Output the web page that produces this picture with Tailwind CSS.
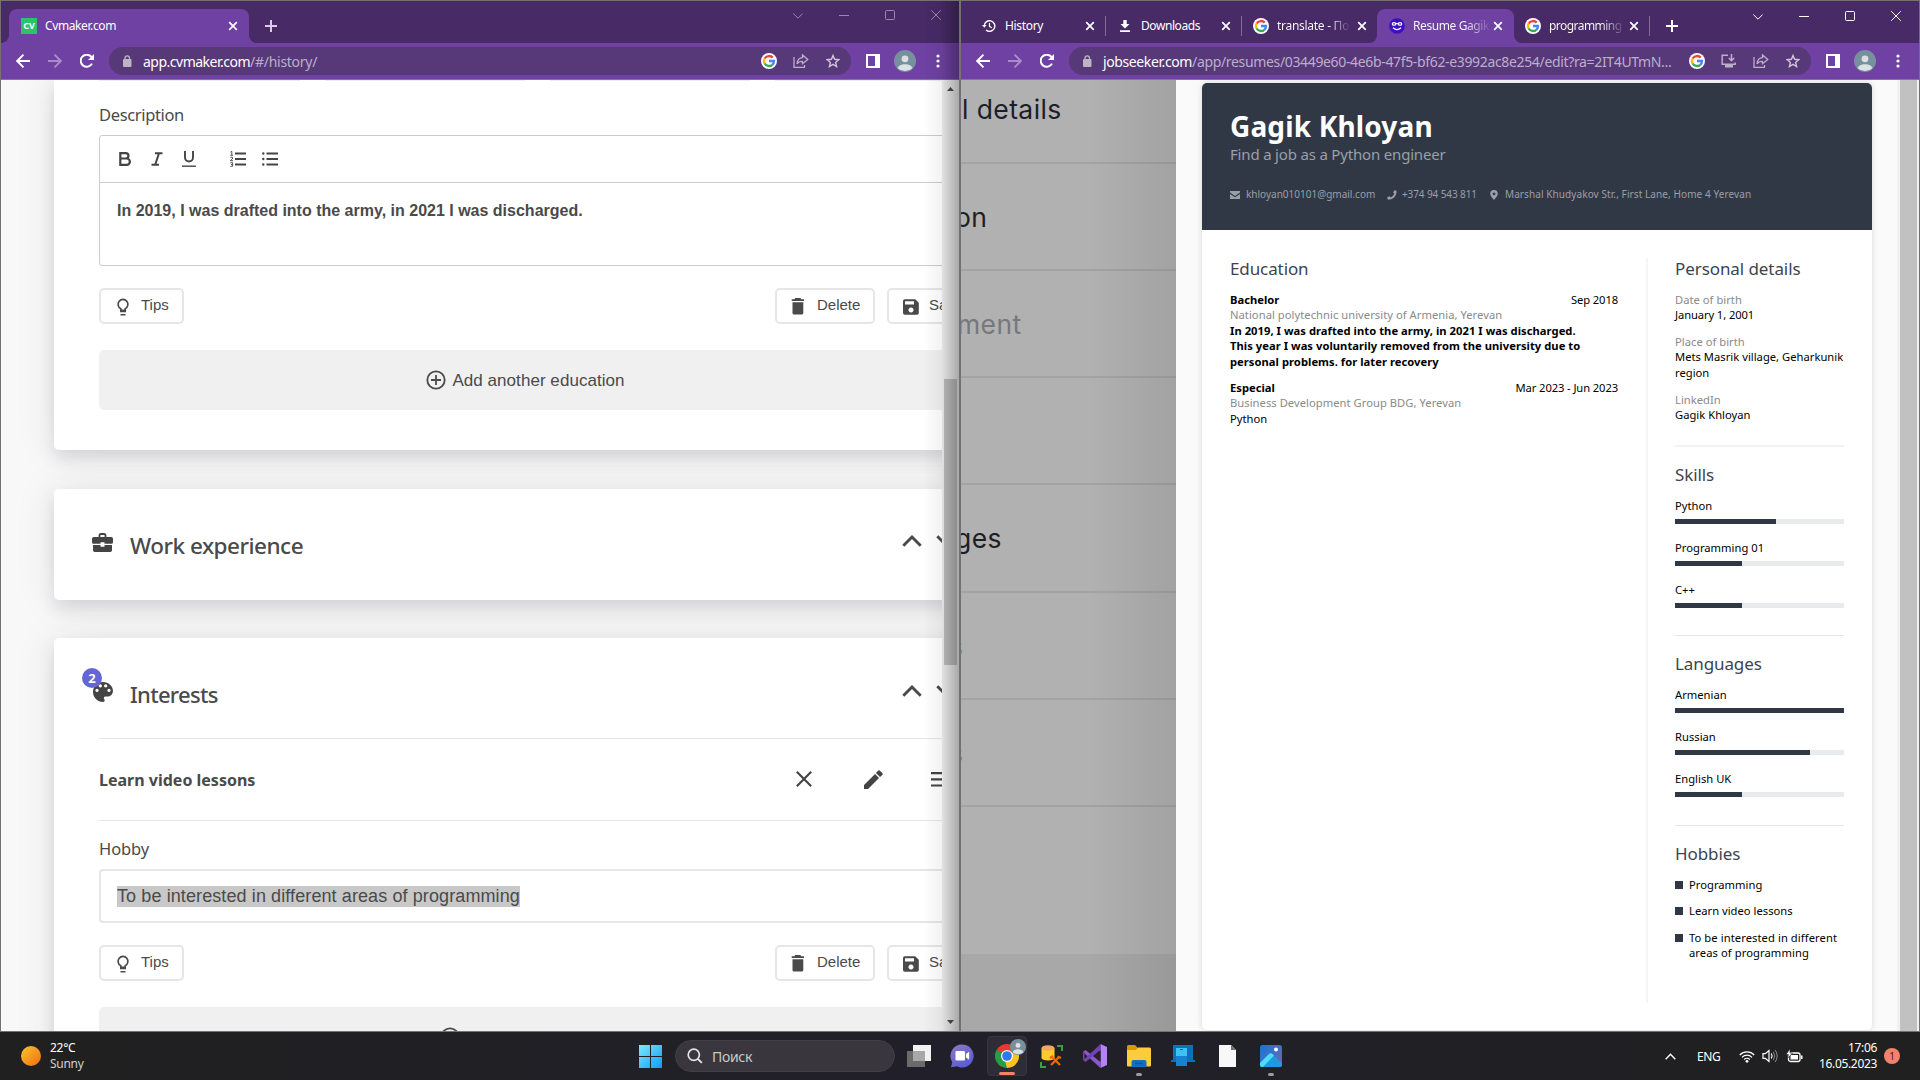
<!DOCTYPE html>
<html lang="en">
<head>
<meta charset="utf-8">
<title>Desktop</title>
<script src="https://cdn.jsdelivr.net/npm/@tailwindcss/browser@4"></script>
</head>
<body class="w-[1920px] h-[1080px] overflow-hidden bg-[#202024] font-['Noto_Sans',sans-serif] whitespace-nowrap">

<svg class="hidden">
  <defs>
    <symbol id="close" viewBox="0 0 10 10"><path d="M1.2 1.2l7.6 7.6M8.8 1.2L1.2 8.8" stroke="currentColor" stroke-width="1.7" fill="none"/></symbol>
    <symbol id="plus" viewBox="0 0 12 12"><path d="M6 0v12M0 6h12" stroke="currentColor" stroke-width="2" fill="none"/></symbol>
    <symbol id="back" viewBox="0 0 14 14"><path d="M14 7H1.5M7.5 .7L1.2 7l6.3 6.3" stroke="currentColor" stroke-width="1.9" fill="none"/></symbol>
    <symbol id="forward" viewBox="0 0 14 14"><path d="M0 7h12.5M6.500 .7L12.800 7l-6.300 6.300" stroke="currentColor" stroke-width="1.900" fill="none"/></symbol>
    <symbol id="reload" viewBox="0 0 14 14"><path d="M12 9.600A6 6 0 1 1 11.400 3" stroke="currentColor" stroke-width="2" fill="none"/><path d="M14 0v6H8z" fill="currentColor"/></symbol>
    <symbol id="lock" viewBox="0 0 10 12"><rect x="1" y="4" width="8.500" height="8" rx="1" fill="currentColor"/><path d="M3 4.500V3.200a2.200 2.200 0 0 1 4.500 0v1.300" stroke="currentColor" stroke-width="1.300" fill="none"/></symbol>
    <symbol id="google" viewBox="0 0 16 16"><circle cx="8" cy="8" r="8" fill="#fff"/><g fill="none" stroke-width="2.300"><path d="M3.700 5.500A5 5 0 0 1 11.700 4.600" stroke="#ea4335"/><path d="M3.800 10.600A5 5 0 0 1 3.700 5.400" stroke="#fbbc05"/><path d="M11.300 11.800A5 5 0 0 1 3.700 10.500" stroke="#34a853"/><path d="M8 8h5a5 5 0 0 1-1.800 3.900" stroke="#4285f4"/></g></symbol>
    <symbol id="share" viewBox="0 0 16 14"><path d="M1 3v10.300h10.500V11M9.500 3.700V.9L14.800 5.500 9.500 9.700V7.300C6.500 7.200 5 8.200 4 9.800 4.300 6.500 6 4 9.500 3.700z" stroke="currentColor" stroke-width="1.300" fill="none"/></symbol>
    <symbol id="install" viewBox="0 0 16 14"><path d="M7 1.300H1.200v9h13V8.500M10.500 0v6M7.800 4l2.700 2.700L13.200 4" stroke="currentColor" stroke-width="1.500" fill="none"/><path d="M4 11h8v2.500H4z" fill="currentColor"/></symbol>
    <symbol id="star" viewBox="0 0 14 14"><path d="M7 1.500l1.600 3.800 4.200.4-3.200 2.700 1 4.100L7 10.300l-3.600 2.200 1-4.100L1.200 5.700l4.200-.4z" stroke="currentColor" stroke-width="1.400" fill="none"/></symbol>
    <symbol id="panel" viewBox="0 0 14 14"><path d="M0 0h14v14H0zM2 2v10h7V2z" fill="#fff" fill-rule="evenodd"/></symbol>
    <symbol id="avatar" viewBox="0 0 22 22"><circle cx="11" cy="11" r="11" fill="#78909c"/><circle cx="11" cy="8.800" r="3.400" fill="#dbe1e4"/><path d="M3.600 18.200C5 12.800 17 12.800 18.400 18.200A11 11 0 0 1 3.600 18.200z" fill="#dbe1e4"/></symbol>
    <symbol id="dots" viewBox="0 0 4 14"><g fill="#fff"><circle cx="2" cy="2" r="1.600"/><circle cx="2" cy="7" r="1.600"/><circle cx="2" cy="12" r="1.600"/></g></symbol>
    <symbol id="wchev" viewBox="0 0 10 6"><path d="M.3.500L5 5.200 9.700.500" stroke="currentColor" stroke-width="1" fill="none"/></symbol>
    <symbol id="wmin" viewBox="0 0 10 10"><path d="M0 5.500h10" stroke="currentColor"/></symbol>
    <symbol id="wmax" viewBox="0 0 10 10"><rect x=".5" y=".5" width="9" height="9" rx="1" stroke="currentColor" fill="none"/></symbol>
    <symbol id="wclose" viewBox="0 0 10 10"><path d="M.2.2l9.600 9.600M9.800.2L.2 9.800" stroke="currentColor"/></symbol>
    <symbol id="flare" viewBox="0 0 8 8"><path d="M8 0v8H0a8 8 0 0 0 8-8z" fill="#6e41a2"/></symbol>
    <symbol id="bulb" viewBox="0 0 14 18"><path d="M4.800 12.200V10.500a4.900 4.900 0 1 1 4.400 0v1.700z" transform="translate(0 .2)" stroke="currentColor" stroke-width="1.700" fill="none"/><path d="M4 13.600h6M4.500 16.800h5" stroke="currentColor" stroke-width="1.500"/></symbol>
    <symbol id="trash" viewBox="0 0 14 17"><path d="M4.200 0h5.200l.8 1.200H13v1.900H.7V1.200h2.700zM1.500 4.200h10.800V15a1.500 1.500 0 0 1-1.500 1.500H3A1.500 1.500 0 0 1 1.500 15z" fill="currentColor"/></symbol>
    <symbol id="save" viewBox="0 0 16 16"><path d="M1.800.2h10.400L15.800 3.800V14a1.800 1.800 0 0 1-1.800 1.800H1.800A1.800 1.800 0 0 1 0 14V2A1.800 1.800 0 0 1 1.800.2zM2 2.200v3.200h9V2.200zM8 8.600a2.500 2.500 0 1 0 .01 0z" fill="currentColor" fill-rule="evenodd"/></symbol>
    <symbol id="addc" viewBox="0 0 20 20"><circle cx="10" cy="10" r="8.700" stroke="currentColor" stroke-width="1.800" fill="none"/><path d="M10 5v10M5 10h10" stroke="currentColor" stroke-width="1.800"/></symbol>
    <symbol id="up" viewBox="0 0 20 12"><path d="M1.300 10.700L10 2l8.700 8.700" stroke="currentColor" stroke-width="2.900" fill="none"/></symbol>
    <symbol id="down" viewBox="0 0 20 12"><path d="M1.300 1.300L10 10l8.700-8.700" stroke="currentColor" stroke-width="2.900" fill="none"/></symbol>
  </defs>
</svg>

<div class="flex h-[1032px]">

  <!-- Left browser window -->
  <section class="relative w-[960px] h-[1032px] border border-[#727272] overflow-hidden flex flex-col">
    <div class="h-[42px] bg-[#472a66] flex shrink-0">
      <svg class="w-2 h-2 self-end"><use href="#flare"/></svg>
      <div class="w-[240px] h-[34px] mt-2 bg-[#6e41a2] rounded-t-lg flex items-center pl-3 pr-[11px] text-white">
        <span class="w-4 h-4 bg-[#2dc26b] text-[9px] font-bold leading-4 text-center">CV</span>
        <span class="ml-2 text-[12px] tracking-[-0.39px]">Cvmaker.com</span>
        <svg class="w-[10px] h-[10px] ml-auto"><use href="#close"/></svg>
      </div>
      <svg class="w-2 h-2 self-end -scale-x-100"><use href="#flare"/></svg>
      <svg class="w-3 h-3 mt-[19px] ml-2 text-[#d9cfe3]"><use href="#plus"/></svg>
      <div class="ml-auto mr-[18px] mt-[9px] flex gap-9 text-[#9a87ae]">
        <svg class="w-[10px] h-[6px] mt-[3px]"><use href="#wchev"/></svg>
        <svg class="w-[10px] h-[10px]"><use href="#wmin"/></svg>
        <svg class="w-[10px] h-[10px]"><use href="#wmax"/></svg>
        <svg class="w-[10px] h-[10px]"><use href="#wclose"/></svg>
      </div>
    </div>
    <div class="h-[37px] shrink-0 bg-[#6e41a2] border-b border-[#8d68b8] flex items-center text-white">
      <svg class="w-[14px] h-[14px] ml-[15px]"><use href="#back"/></svg>
      <svg class="w-[14px] h-[14px] ml-[18px] text-[#a98cc8]"><use href="#forward"/></svg>
      <svg class="w-[14px] h-[14px] ml-[18px]"><use href="#reload"/></svg>
      <div class="ml-[15px] w-[742px] h-7 rounded-full bg-[#573879] flex items-center pl-[13px] pr-[11px]">
        <svg class="w-[10px] h-3 text-[#bdb5c4]"><use href="#lock"/></svg>
        <span class="ml-[11px] text-[14px] tracking-[-0.5px]">app.cvmaker.com</span><span class="text-[14px] tracking-[-0.28px] text-[#bcafc9]">/#/history/</span>
        <svg class="w-4 h-4 ml-auto"><use href="#google"/></svg>
        <svg class="w-4 h-[14px] ml-4 text-[#bcafc9]"><use href="#share"/></svg>
        <svg class="w-[14px] h-[14px] ml-[17px] text-[#cfc5d9]"><use href="#star"/></svg>
      </div>
      <svg class="w-[14px] h-[14px] ml-[15px]"><use href="#panel"/></svg>
      <svg class="w-[22px] h-[22px] ml-[14px]"><use href="#avatar"/></svg>
      <svg class="w-1 h-[14px] ml-5"><use href="#dots"/></svg>
    </div>

    <div class="flex flex-1 min-h-0">
      <main class="w-[941px] overflow-hidden bg-[#f8f8f8] pl-[52.500px] text-[#4a4a4a]">
        <div class="w-[945px] flex flex-col gap-[39px]">
          <!-- Education card -->
          <div class="h-[370px] shrink-0 bg-white rounded-b-[5px] shadow-[0_8px_16px_rgba(40,40,60,.13),0_0_44px_rgba(40,40,60,.09)] pl-[45.500px] flex flex-col">
            <div class="flex h-px gap-[25px]"><i class="w-[201px] bg-[#ebebeb]"></i><i class="w-[200px] bg-[#ebebeb]"></i><i class="w-[200px] bg-[#ebebeb]"></i><i class="w-[200px] bg-[#ebebeb]"></i></div>
            <div class="mt-[22px] h-6 leading-6 text-[16.500px] tracking-[-0.35px]">Description</div>
            <div class="mt-2 h-[131px] w-[853px] border border-[#ccc] rounded-[3px]">
              <div class="h-[47px] border-b border-[#ccc] flex items-center pl-[19px]">
                <svg class="w-3 h-[14px]" viewBox="0 0 12 14"><path d="M1.300 1.200h5.500a2.600 2.600 0 0 1 0 5.300H1.300zM1.300 6.500h6.400a3.100 3.100 0 0 1 0 6.300H1.300z" stroke="#444" stroke-width="2.200" fill="none"/></svg>
                <svg class="w-3 h-[14px] ml-5" viewBox="0 0 12 14"><path d="M4 1.200h7.500M.5 12.800H8M8 1.200L4.200 12.800" stroke="#444" stroke-width="2" fill="none"/></svg>
                <svg class="w-[14px] h-4 ml-[19px]" viewBox="0 0 14 16"><path d="M3 0v6.500a4 4 0 0 0 8 0V0" stroke="#444" stroke-width="1.900" fill="none"/><path d="M0 15.200h14" stroke="#444" stroke-width="1.400"/></svg>
                <svg class="w-4 h-4 ml-[34px]" viewBox="0 0 16 16"><path d="M5 2.500h11M5 8h11M5 13.500h11" stroke="#444" stroke-width="2"/><path d="M.5 1l1.300-.6V4M.3 4.300h2.700M.3 6.300h2.200v1.500L.3 9.700h2.700M.3 11.700h2.300v3.600H.3M1 13.500h1.600" stroke="#444" stroke-width=".9" fill="none"/></svg>
                <svg class="w-4 h-4 ml-4" viewBox="0 0 16 16"><path d="M4.500 2.500H16M4.500 8H16M4.500 13.500H16" stroke="#444" stroke-width="2"/><g fill="#444"><circle cx="1.300" cy="2.500" r="1.200"/><circle cx="1.300" cy="8" r="1.200"/><circle cx="1.300" cy="13.500" r="1.200"/></g></svg>
              </div>
              <p class="mt-[18px] pl-[17px] leading-5 text-[16px] font-bold font-['Liberation_Sans',sans-serif]">In 2019, I was drafted into the army, in 2021 I was discharged.</p>
            </div>
            <div class="mt-[22px] flex h-9 text-[15px] font-['Liberation_Sans',sans-serif]">
              <div class="w-[85px] shrink-0 border-2 border-[#e6e6e6] rounded-[5px] flex items-center pl-[15px]"><svg class="w-[14px] h-[18px] mt-[2px]"><use href="#bulb"/></svg><span class="ml-[11px] -mt-px">Tips</span></div>
              <div class="w-[100px] shrink-0 ml-[591px] border-2 border-[#e6e6e6] rounded-[5px] flex items-center pl-[14px]"><svg class="w-[14px] h-[17px]"><use href="#trash"/></svg><span class="ml-3 -mt-px">Delete</span></div>
              <div class="w-[103px] shrink-0 ml-3 border-2 border-[#e6e6e6] rounded-[5px] flex items-center pl-[14px]"><svg class="w-4 h-4 mt-px"><use href="#save"/></svg><span class="ml-[10px] -mt-px">Save</span></div>
            </div>
            <div class="mt-[26px] h-[60px] w-[853px] bg-[#f0f0f0] rounded-[5px] flex items-center justify-center text-[17px] font-['Liberation_Sans',sans-serif]"><svg class="w-5 h-5"><use href="#addc"/></svg><span class="ml-[6px] mt-px tracking-[0.05px]">Add another education</span></div>
          </div>
          <!-- Work experience card -->
          <div class="h-[111px] shrink-0 bg-white rounded-[5px] shadow-[0_8px_16px_rgba(40,40,60,.13),0_0_44px_rgba(40,40,60,.09)] pl-[38.500px] flex">
            <svg class="w-[21px] h-[20px] mt-[44px]" viewBox="0 0 21 20"><path d="M7.500 4V2.200A1.400 1.400 0 0 1 8.900 1h3.200a1.400 1.400 0 0 1 1.400 1.200V4" stroke="#444" stroke-width="1.800" fill="none"/><path d="M1.800 4h17.400A1.800 1.800 0 0 1 21 5.800v3.400a1.500 1.500 0 0 1-1.500 1.500h-7V9.300H8.500v1.400h-7A1.500 1.500 0 0 1 0 9.200V5.800A1.800 1.800 0 0 1 1.800 4zM1 12h7.500v1.800h4V12H20v5.200a1.800 1.800 0 0 1-1.800 1.800H2.800A1.800 1.800 0 0 1 1 17.200z" fill="#444"/></svg>
            <span class="ml-[17px] mt-[41px] h-8 leading-8 text-[22.500px] font-medium tracking-[-0.5px] w-[774px]">Work experience</span>
            <svg class="w-5 h-3 mt-[46px] -ml-[2px]"><use href="#up"/></svg>
            <svg class="w-5 h-3 mt-[46px] ml-[14px]"><use href="#down"/></svg>
          </div>
          <!-- Interests card -->
          <div class="h-[500px] -mt-px shrink-0 bg-white rounded-[5px] shadow-[0_8px_16px_rgba(40,40,60,.13),0_0_44px_rgba(40,40,60,.09)]">
            <div class="flex h-[100px] pl-[38.500px]">
              <div class="relative w-[21px] mt-[44px]">
                <svg class="w-5 h-5 ml-px" viewBox="0 0 20 20"><path d="M10 0C4.500 0 0 4.500 0 10s4.500 10 10 10a1.700 1.700 0 0 0 1.300-2.800A1.600 1.600 0 0 1 12.500 14.500h2A5.500 5.500 0 0 0 20 9C20 4 15.500 0 10 0zM4 10a1.600 1.600 0 1 1 .01 0zM7.300 5.500a1.600 1.600 0 1 1 .01 0zM12.700 5.500a1.600 1.600 0 1 1 .01 0zM16 10a1.600 1.600 0 1 1 .01 0z" fill="#444"/></svg>
                <span class="absolute -left-[10px] -top-[14px] w-5 h-5 rounded-full bg-[#6466d4] text-white text-[13px] leading-5 font-bold text-center">2</span>
              </div>
              <span class="ml-[17px] mt-[40px] h-8 leading-8 text-[22px] font-medium tracking-[-0.7px] w-[774px]">Interests</span>
              <svg class="w-5 h-3 mt-[47px] -ml-[2px]"><use href="#up"/></svg>
              <svg class="w-5 h-3 mt-[47px] ml-[14px]"><use href="#down"/></svg>
            </div>
            <div class="ml-[45.500px] w-[853px]">
              <div class="h-[83px] border-y border-[#e6e6e6] flex items-center">
                <span class="text-[16px] font-bold w-[697px]">Learn video lessons</span>
                <svg class="w-4 h-4 -mt-px" viewBox="0 0 16 16"><path d="M.8.8l14.400 14.400M15.200.8L.8 15.200" stroke="#444" stroke-width="2.100"/></svg>
                <svg class="w-[19px] h-[19px] ml-[52px] -mt-px" viewBox="0 0 19 19"><path d="M0 15v4h4L15 8l-4-4zM12 3l2-2.300a1.500 1.500 0 0 1 2 0L18.300 3a1.500 1.500 0 0 1 0 2L16 7z" fill="#444"/></svg>
                <svg class="w-[18px] h-[15px] ml-[48px] -mt-px" viewBox="0 0 18 15"><path d="M0 1.200h18M0 7.300h18M0 13.500h18" stroke="#444" stroke-width="2.200"/></svg>
              </div>
              <div class="mt-4 h-6 leading-6 text-[16.500px] tracking-[-0.1px]">Hobby</div>
              <div class="mt-[8px] h-[54px] border-2 border-[#e6e6e6] rounded-[4px] pl-4 flex items-center"><span class="bg-[#c8c8c8] h-[21px] leading-[21px] mt-px text-[18px] tracking-[0.1px] font-['Liberation_Sans',sans-serif]">To be interested in different areas of programming</span></div>
              <div class="mt-[22px] flex h-9 text-[15px] font-['Liberation_Sans',sans-serif]">
                <div class="w-[85px] shrink-0 border-2 border-[#e6e6e6] rounded-[5px] flex items-center pl-[15px]"><svg class="w-[14px] h-[18px] mt-[2px]"><use href="#bulb"/></svg><span class="ml-[11px] -mt-px">Tips</span></div>
                <div class="w-[100px] shrink-0 ml-[591px] border-2 border-[#e6e6e6] rounded-[5px] flex items-center pl-[14px]"><svg class="w-[14px] h-[17px]"><use href="#trash"/></svg><span class="ml-3 -mt-px">Delete</span></div>
                <div class="w-[103px] shrink-0 ml-3 border-2 border-[#e6e6e6] rounded-[5px] flex items-center pl-[14px]"><svg class="w-4 h-4 mt-px"><use href="#save"/></svg><span class="ml-[10px] -mt-px">Save</span></div>
              </div>
              <div class="mt-[26px] h-[60px] bg-[#f0f0f0] rounded-[5px] flex pt-5 pl-[341px]"><svg class="w-5 h-5"><use href="#addc"/></svg></div>
            </div>
          </div>
        </div>
      </main>
      <!-- Scrollbar -->
      <div class="w-[17px] bg-[#f1f1f1] flex flex-col items-center">
        <svg class="w-[7px] h-1 mt-[7px]" viewBox="0 0 7 4"><path d="M3.500 0L7 4H0z" fill="#505050"/></svg>
        <div class="w-[13px] h-[286px] mt-[288px] bg-[#c1c1c1]"></div>
        <svg class="w-[7px] h-1 mt-auto mb-[7px]" viewBox="0 0 7 4"><path d="M0 0h7L3.500 4z" fill="#505050"/></svg>
      </div>
    </div>
    <!-- Drop shadow cast by the neighbouring window -->
    <div class="absolute right-0 top-0 bottom-0 w-9 bg-linear-to-r from-black/0 via-black/5 to-black/30 pointer-events-none"></div>
  </section>

  <!-- Right browser window -->
  <section class="w-[960px] h-[1032px] border border-[#727272] overflow-hidden flex flex-col">
    <div class="h-[42px] bg-[#472a66] flex items-center shrink-0 text-white text-[12px]">
      <div class="w-[144px] flex items-center pl-[21px] pt-2">
        <svg class="w-[14px] h-[14px]" viewBox="0 0 14 14"><path d="M2.200 7A5.300 5.300 0 1 1 4 11" stroke="#fff" stroke-width="1.400" fill="none"/><path d="M0 6h4.600L2.300 8.700z" fill="#fff"/><path d="M7.500 4v3.500l2.300 1.300" stroke="#fff" stroke-width="1.200" fill="none"/></svg>
        <span class="ml-[9px] w-[80px] tracking-[-0.34px]">History</span>
        <svg class="w-[10px] h-[10px]"><use href="#close"/></svg>
      </div>
      <div class="w-[136px] h-5 mt-2 border-l border-[#836f96] flex items-center pl-[14px]">
        <svg class="w-[10px] h-3" viewBox="0 0 10 12"><path d="M3.300 0h3.400v4h2.800L5 8.500.5 4h2.800zM0 10.300h10V12H0z" fill="#fff"/></svg>
        <span class="ml-[11px] w-[80px] tracking-[-0.42px]">Downloads</span>
        <svg class="w-[10px] h-[10px]"><use href="#close"/></svg>
      </div>
      <div class="w-[128px] h-5 mt-2 border-l border-[#836f96] flex items-center pl-[11px]">
        <svg class="w-4 h-4"><use href="#google"/></svg>
        <span class="ml-2 w-[80px] tracking-[-0.28px] bg-linear-to-r from-white from-65% to-[#5a3e77] to-90% bg-clip-text text-transparent">translate - По</span>
        <svg class="w-[10px] h-[10px]"><use href="#close"/></svg>
      </div>
      <svg class="w-2 h-2 self-end"><use href="#flare"/></svg>
      <div class="w-[137px] h-[34px] mt-2 bg-[#6e41a2] rounded-t-lg flex items-center pl-3">
        <svg class="w-4 h-4" viewBox="0 0 16 16"><circle cx="8" cy="8" r="7.800" fill="#3d0fc4"/><g stroke="#fff" fill="none" stroke-width="1.200"><ellipse cx="5" cy="5.900" rx="1.700" ry="1.300"/><ellipse cx="11" cy="5.900" rx="1.700" ry="1.300"/><path d="M6.700 5.600h2.600M4 9.800q4 3.600 8 0"/></g></svg>
        <span class="ml-2 w-[80px] overflow-hidden tracking-[-0.4px] bg-linear-to-r from-white from-65% to-[#7a51aa] to-95% bg-clip-text text-transparent">Resume Gagik</span>
        <svg class="w-[10px] h-[10px]"><use href="#close"/></svg>
      </div>
      <svg class="w-2 h-2 self-end -scale-x-100"><use href="#flare"/></svg>
      <div class="w-[128px] h-5 mt-2 border-r border-[#836f96] flex items-center pl-[3px]">
        <svg class="w-4 h-4"><use href="#google"/></svg>
        <span class="ml-2 w-[80px] tracking-[-0.55px] bg-linear-to-r from-white from-65% to-[#6a5084] to-90% bg-clip-text text-transparent">programming</span>
        <svg class="w-[10px] h-[10px]"><use href="#close"/></svg>
      </div>
      <svg class="w-3 h-3 mt-2 ml-4"><use href="#plus"/></svg>
      <div class="ml-auto mr-[18px] mb-[13px] flex gap-9">
        <svg class="w-[10px] h-[6px] mt-[3px]"><use href="#wchev"/></svg>
        <svg class="w-[10px] h-[10px]"><use href="#wmin"/></svg>
        <svg class="w-[10px] h-[10px]"><use href="#wmax"/></svg>
        <svg class="w-[10px] h-[10px]"><use href="#wclose"/></svg>
      </div>
    </div>
    <div class="h-[37px] shrink-0 bg-[#6e41a2] border-b border-[#8d68b8] flex items-center text-white">
      <svg class="w-[14px] h-[14px] ml-[15px]"><use href="#back"/></svg>
      <svg class="w-[14px] h-[14px] ml-[18px] text-[#a98cc8]"><use href="#forward"/></svg>
      <svg class="w-[14px] h-[14px] ml-[18px]"><use href="#reload"/></svg>
      <div class="ml-[15px] w-[742px] h-7 rounded-full bg-[#573879] flex items-center pl-[13px] pr-[11px]">
        <svg class="w-[10px] h-3 text-[#bdb5c4]"><use href="#lock"/></svg>
        <span class="ml-[11px] text-[14px] tracking-[-0.39px]">jobseeker.com</span><span class="text-[14px] tracking-[-0.345px] text-[#bcafc9]">/app/resumes/03449e60-4e6b-47f5-bf62-e3992ac8e254/edit?ra=2IT4UTmN...</span>
        <svg class="w-4 h-4 ml-auto"><use href="#google"/></svg>
        <svg class="w-4 h-[14px] ml-4 text-[#bcafc9]"><use href="#install"/></svg>
        <svg class="w-4 h-[14px] ml-4 text-[#bcafc9]"><use href="#share"/></svg>
        <svg class="w-[14px] h-[14px] ml-[17px] text-[#cfc5d9]"><use href="#star"/></svg>
      </div>
      <svg class="w-[14px] h-[14px] ml-[15px]"><use href="#panel"/></svg>
      <svg class="w-[22px] h-[22px] ml-[14px]"><use href="#avatar"/></svg>
      <svg class="w-1 h-[14px] ml-5"><use href="#dots"/></svg>
    </div>

    <div class="flex flex-1 min-h-0">
      <!-- Dimmed section list behind the preview -->
      <aside class="w-[215px] overflow-hidden bg-linear-to-r from-[#b1b1b1] from-60% to-[#a2a2a2] text-[26.500px] leading-[58px] text-[#1d1e26] font-['Inter',sans-serif] tracking-[0.4px]">
        <div class="h-[84px] border-b-2 border-black/8 pl-px">l details</div>
        <div class="h-[107px] border-b-2 border-black/8 pt-6"><span class="-ml-[6px]">on</span></div>
        <div class="h-[107px] border-b-2 border-black/8 pt-6 text-[#77777c]"><span class="-ml-[4px]">ment</span></div>
        <div class="h-[107px] border-b-2 border-black/8"></div>
        <div class="h-[108px] border-b-2 border-black/8 pt-6"><span class="-ml-[6px]">ges</span></div>
        <div class="h-[107px] border-b-2 border-black/8 pt-6 text-[#6a7880]"><span class="-ml-[12px]">s</span></div>
        <div class="h-[107px] border-b-2 border-black/8 pt-6 text-[#6a7880]"><span class="-ml-[12px]">s</span></div>
        <div class="h-[147px]"></div>
        <div class="h-[80px] bg-black/5"></div>
      </aside>

      <div class="w-[721px] bg-[#fafafa] pl-[26px] pt-[3px]">
        <article class="w-[669.500px] h-[947px] bg-white rounded-[5px] overflow-hidden shadow-[0_0_6px_rgba(0,0,0,.14)] text-[11.200px] leading-[15.400px] tracking-[0.02px] text-black flex flex-col">
          <header class="h-[147px] shrink-0 bg-[#313845] px-7 text-[#9a9fa8]">
            <h1 class="pt-[22px] h-[61px] leading-[42px] text-[28px] font-bold tracking-[0.15px] text-white">Gagik Khloyan</h1>
            <p class="h-5 leading-5 text-[15px] tracking-[-0.18px]">Find a job as a Python engineer</p>
            <div class="mt-[23px] h-4 flex items-center text-[10px] tracking-normal">
              <svg class="w-[10px] h-2" viewBox="0 0 10 8"><path d="M0 0h10v1.600L5 5 0 1.600zM0 2.900L5 6.200l5-3.300V8H0z" fill="#9a9fa8"/></svg>
              <span class="ml-[6px] w-[130px]">khloyan010101@gmail.com</span>
              <svg class="w-[10px] h-[10px] ml-[11px]" viewBox="0 0 10 10"><path d="M7.300.2L9.600.7C9.800 6 6 9.800.8 9.600L.2 7.300l2.400-1.100 1.100 1.200A7 7 0 0 0 7.300 3.700L6.200 2.600z" fill="#9a9fa8"/></svg>
              <span class="ml-[5px] w-[75px] tracking-[-0.1px]">+374 94 543 811</span>
              <svg class="w-2 h-[10px] ml-[13px]" viewBox="0 0 8 10"><path d="M4 0a3.800 3.800 0 0 1 3.800 3.800C7.800 6 4 10 4 10S.2 6 .2 3.800A3.800 3.800 0 0 1 4 0zM4 2.400a1.400 1.400 0 1 0 .01 0z" fill="#9a9fa8" fill-rule="evenodd"/></svg>
              <span class="ml-[7px] tracking-[0.09px]">Marshal Khudyakov Str., First Lane, Home 4 Yerevan</span>
            </div>
          </header>
          <div class="flex pt-7 pl-7">
            <div class="w-[416px] pr-7">
              <h2 class="h-[34px] leading-[21px] text-[17px] tracking-[-0.1px] text-[#3c4450]">Education</h2>
              <div class="flex justify-between"><b>Bachelor</b><span class="tracking-[-0.1px]">Sep 2018</span></div>
              <div class="tracking-[0.04px] text-[#8a8a8a]">National polytechnic university of Armenia, Yerevan</div>
              <b class="block tracking-[0.04px]">In 2019, I was drafted into the army, in 2021 I was discharged.<br>This year I was voluntarily removed from the university due to<br>personal problems. for later recovery</b>
              <div class="mt-[11px] flex justify-between"><b>Especial</b><span class="tracking-[-0.1px]">Mar 2023 - Jun 2023</span></div>
              <div class="tracking-[0.04px] text-[#8a8a8a]">Business Development Group BDG, Yerevan</div>
              <div>Python</div>
            </div>
            <div class="w-[225.500px] h-[745px] border-l-2 border-[#f5f5f5] pl-[27px] pr-7">
              <h2 class="h-[34px] leading-[21px] text-[17px] tracking-[-0.08px] text-[#3c4450]">Personal details</h2>
              <div class="text-[#8a8a8a]">Date of birth</div>
              <div class="tracking-[-0.1px]">January 1, 2001</div>
              <div class="mt-[11px] text-[#8a8a8a]">Place of birth</div>
              <div>Mets Masrik village, Geharkunik<br>region</div>
              <div class="mt-[11.500px] text-[#8a8a8a]">LinkedIn</div>
              <div class="h-[38px]">Gagik Khloyan</div>
              <div class="h-[190px] border-t-2 border-[#f3f3f3] pt-[17px]">
                <h2 class="h-[34px] leading-[21px] text-[17px] tracking-[-0.1px] text-[#3c4450]">Skills</h2>
                <div class="h-[42px]">Python<div class="mt-[5.600px] h-[5px] bg-[#e8eaec]"><div class="w-[60%] h-[5px] bg-[#313845]"></div></div></div>
                <div class="h-[42px]">Programming 01<div class="mt-[5.600px] h-[5px] bg-[#e8eaec]"><div class="w-[40%] h-[5px] bg-[#313845]"></div></div></div>
                <div class="h-[42px]">C++<div class="mt-[5.600px] h-[5px] bg-[#e8eaec]"><div class="w-[40%] h-[5px] bg-[#313845]"></div></div></div>
              </div>
              <div class="h-[190px] border-t border-[#e6e6e6] pt-[17px]">
                <h2 class="h-[34px] leading-[21px] text-[17px] tracking-[-0.1px] text-[#3c4450]">Languages</h2>
                <div class="h-[42px]">Armenian<div class="mt-[5.600px] h-[5px] bg-[#e8eaec]"><div class="w-full h-[5px] bg-[#313845]"></div></div></div>
                <div class="h-[42px]">Russian<div class="mt-[5.600px] h-[5px] bg-[#e8eaec]"><div class="w-[80%] h-[5px] bg-[#313845]"></div></div></div>
                <div class="h-[42px]">English UK<div class="mt-[5.600px] h-[5px] bg-[#e8eaec]"><div class="w-[40%] h-[5px] bg-[#313845]"></div></div></div>
              </div>
              <div class="border-t border-[#e6e6e6] pt-[17px]">
                <h2 class="h-[34px] leading-[21px] text-[17px] tracking-[-0.1px] text-[#3c4450]">Hobbies</h2>
                <ul class="flex flex-col gap-[11px]">
                  <li class="flex gap-[6px]"><i class="w-2 h-2 mt-1 bg-[#313845]"></i>Programming</li>
                  <li class="flex gap-[6px]"><i class="w-2 h-2 mt-1 bg-[#313845]"></i>Learn video lessons</li>
                  <li class="flex gap-[6px]"><i class="w-2 h-2 mt-1 bg-[#313845]"></i><span class="tracking-[0.08px]">To be interested in different<br>areas of programming</span></li>
                </ul>
              </div>
            </div>
          </div>
        </article>
      </div>
      <div class="w-[22px] bg-[#f1f1f1] pl-[3px]"><div class="w-[17px] h-full bg-[#c1c1c1]"></div></div>
    </div>
  </section>
</div>

<!-- Taskbar -->
<footer class="h-12 bg-linear-to-r from-[#202020] via-[#21202a] to-[#202020] flex items-center text-white">
  <div class="ml-[21px] w-5 h-5 rounded-full bg-linear-to-br from-[#f2c62e] to-[#f2660f]"></div>
  <div class="ml-[9px] w-[589px] text-[12px] leading-4 tracking-[-0.3px]"><div>22°C</div><div class="text-[#d0d0d0]">Sunny</div></div>
  <svg class="w-[23px] h-[23px]" viewBox="0 0 23 23"><defs><linearGradient id="win" gradientUnits="userSpaceOnUse" x1="0" y1="0" x2="23" y2="23"><stop offset="0" stop-color="#7fe9fb"/><stop offset="1" stop-color="#0f9bf5"/></linearGradient></defs><path d="M0 0h11v11H0zM12 0h11v11H12zM0 12h11v11H0zM12 12h11v11H12z" fill="url(#win)"/></svg>
  <div class="ml-[13px] w-[220px] h-8 rounded-full bg-[#39373d] border border-[#403e44] flex items-center pl-[11px] text-[14px] tracking-[-0.32px] text-[#c9c9c9]">
    <svg class="w-4 h-4" viewBox="0 0 16 16"><circle cx="6.800" cy="6.800" r="5.600" stroke="#e4e4e4" stroke-width="1.700" fill="none"/><path d="M10.800 10.800l4 4" stroke="#e4e4e4" stroke-width="1.900"/></svg>
    <span class="ml-[9px]">Поиск</span>
  </div>
  <svg class="w-6 h-[22px] ml-3" viewBox="0 0 24 22"><path d="M6 0h18v16H6z" fill="#f2f2f2"/><path d="M0 6h18v16H0z" fill="#6b6b6b"/><path d="M6 6h12v10H6z" fill="#a8a8a8"/></svg>
  <svg class="w-[24px] h-6 ml-[19px]" viewBox="0 0 24 24"><defs><linearGradient id="chat" x1="0" y1="0" x2="0.6" y2="1"><stop offset="0" stop-color="#8d7ac0"/><stop offset="1" stop-color="#5b5bd6"/></linearGradient></defs><path d="M12 .5A11.500 11.500 0 1 1 7 22.300L1 23.200l1.300-5A11.500 11.500 0 0 1 12 .5z" fill="url(#chat)"/><rect x="5.500" y="7" width="9.500" height="9.500" rx="1.200" fill="#fff"/><path d="M16 10l3.200-2.300v8L16 13.500z" fill="#fff"/></svg>
  <div class="ml-[13px] w-10 h-10 rounded bg-[#2e2c36] border border-[#37353f] relative flex justify-center pt-[7px]">
    <svg class="w-6 h-6" viewBox="0 0 24 24"><path d="M12 12L1.600 6A12 12 0 0 1 22.400 6z" fill="#e33b2e"/><path d="M12 12L22.400 6A12 12 0 0 1 12 24z" fill="#fcc31e"/><path d="M12 12v12A12 12 0 0 1 1.600 6z" fill="#2a9c48"/><path d="M1.600 6L7 15l5-3z" fill="#2a9c48"/><path d="M12 6h10.400L17 9z" fill="#e33b2e"/><path d="M17.200 15L12 24 10 17z" fill="#fcc31e"/><circle cx="12" cy="12" r="6" fill="#fff"/><circle cx="12" cy="12" r="4.800" fill="#2b78ef"/></svg>
    <svg class="absolute right-0 top-[2px] w-4 h-4"><use href="#avatar"/></svg>
    <i class="absolute bottom-0 left-[11px] w-4 h-[3px] rounded-full bg-[#f2826b]"></i>
  </div>
  <svg class="w-[23px] h-[23px] ml-[13px]" viewBox="0 0 23 23"><path d="M1.500 3v10a6.500 2.500 0 0 0 13 0V3z" fill="#fccb2b"/><ellipse cx="8" cy="3" rx="6.500" ry="2.800" fill="#f2a75c"/><path d="M17 1h5v5M1 17v5h5" stroke="#3f9a4b" stroke-width="2" fill="none"/><path d="M11 20l8-8M12 12l8 8M10 13l3-2M17.500 11.500l3.500 1.500" stroke="#e86c0a" stroke-width="2.200" fill="none"/></svg>
  <svg class="w-6 h-6 ml-5" viewBox="0 0 24 24"><path d="M17.500 0L24 3v18l-6.500 3z" fill="#b583f0"/><path d="M17.500 0v24L0 8l2.500-2L17.500 18z" fill="#8d55d0"/><path d="M17.500 0v6L2.500 18 0 16V7l1.500 1v7z" fill="#7440b8"/><path d="M17.500 6.500v11L10.500 12z" fill="#25222d"/></svg>
  <div class="relative ml-5 h-12 flex items-center">
    <svg class="w-6 h-[22px]" viewBox="0 0 24 22"><path d="M0 1.500A1.500 1.500 0 0 1 1.500 0H8l3 3v4H0z" fill="#d99a00"/><path d="M0 5h9l2-2.500h11.500A1.500 1.500 0 0 1 24 4v16.500a1 1 0 0 1-1 1H1a1 1 0 0 1-1-1z" fill="#fccc3c"/><path d="M4.500 22v-5a2 2 0 0 1 2-2h11a2 2 0 0 1 2 2v5z" fill="#0f6fc4"/><path d="M8 18.500h8" stroke="#0a57a0" stroke-width="1.500"/></svg>
    <i class="absolute bottom-[4px] left-[9px] w-[6px] h-[3px] rounded-full bg-[#9b9a9f]"></i>
  </div>
  <svg class="w-6 h-[22px] ml-5" viewBox="0 0 24 22"><path d="M2 0h20v15h2v2H0v-2h2z" fill="#0f6fb8"/><path d="M5 3h11v18H5z" fill="#1583cf"/><path d="M5 3h11v8H5z" fill="#3bc3f3"/><path d="M9 4.500h3" stroke="#0d5f9c"/></svg>
  <svg class="w-[17px] h-[22px] ml-6" viewBox="0 0 17 22"><path d="M0 0h12l5 5v17H0z" fill="#f8f8f8"/><path d="M12 0v5h5z" fill="#6f6f73"/></svg>
  <div class="relative ml-6 h-12 flex items-center">
    <svg class="w-[22px] h-[22px]" viewBox="0 0 22 22"><defs><linearGradient id="ph" x1="0" y1="0" x2="1" y2="1"><stop offset="0" stop-color="#1478d4"/><stop offset=".6" stop-color="#4a6fc0"/><stop offset="1" stop-color="#8d5a9c"/></linearGradient></defs><rect width="22" height="22" rx="2.500" fill="url(#ph)"/><path d="M0 18L9 9a2.500 2.500 0 0 1 3.500 0L22 18.500V20a2 2 0 0 1-2 2H2a2 2 0 0 1-2-2z" fill="#1c9be0"/><path d="M0 18L9 9a2.500 2.500 0 0 1 3.500 0L14 10.500 3 22H2a2 2 0 0 1-2-2z" fill="#4fdcfa"/><circle cx="16" cy="4.500" r="2" fill="#fff"/></svg>
    <i class="absolute bottom-[4px] left-[8px] w-[6px] h-[3px] rounded-full bg-[#9b9a9f]"></i>
  </div>
  <div class="ml-auto flex items-center text-[12px]">
    <svg class="w-[11px] h-[7px]" viewBox="0 0 11 7"><path d="M.7 6.300L5.500 1.300l4.800 5" stroke="#fff" stroke-width="1.400" fill="none"/></svg>
    <span class="ml-[21px] w-6 mt-px tracking-[-0.4px]">ENG</span>
    <svg class="w-4 h-[13px] ml-[18px]" viewBox="0 0 16 13"><g stroke="#fff" fill="none" stroke-width="1.200"><path d="M.8 5a10 10 0 0 1 14.400 0M3 7.300a7 7 0 0 1 10 0M5.200 9.500a4 4 0 0 1 5.600 0"/></g><circle cx="8" cy="11.300" r="1.400" fill="#fff"/></svg>
    <svg class="w-[16px] h-[14px] ml-[7px]" viewBox="0 0 16 14"><path d="M1 4.700h2.300L7 1.500v11L3.300 9.300H1z" stroke="#fff" stroke-width="1.200" fill="none"/><path d="M9.300 4.500q1.500 2.500 0 5" stroke="#fff" stroke-width="1.200" fill="none"/><path d="M11.300 2.800q3 4.200 0 8.400M13.200 1q4 6 0 12" stroke="#8a8a8a" stroke-width="1" fill="none"/></svg>
    <svg class="w-[17px] h-[14px] ml-[8px]" viewBox="0 0 17 14"><rect x="2.500" y="4" width="11.500" height="8.500" rx="2" stroke="#fff" stroke-width="1.300" fill="none"/><path d="M4.500 6h7.500v4.500H4.500zM15 6.500h1.500v3.500H15z" fill="#fff"/><path d="M4 0L0 5.500h2.500L1.500 9.500 6.500 4H4z" fill="#fff" stroke="#202020" stroke-width=".6"/></svg>
    <div class="ml-[16px] text-right leading-4 tracking-[-0.33px]"><div>17:06</div><div>16.05.2023</div></div>
    <span class="ml-[7px] mr-5 w-4 h-4 rounded-full bg-[#f2826b] text-[10px] leading-4 text-center text-[#3a2320]">1</span>
  </div>
</footer>
</body>
</html>
